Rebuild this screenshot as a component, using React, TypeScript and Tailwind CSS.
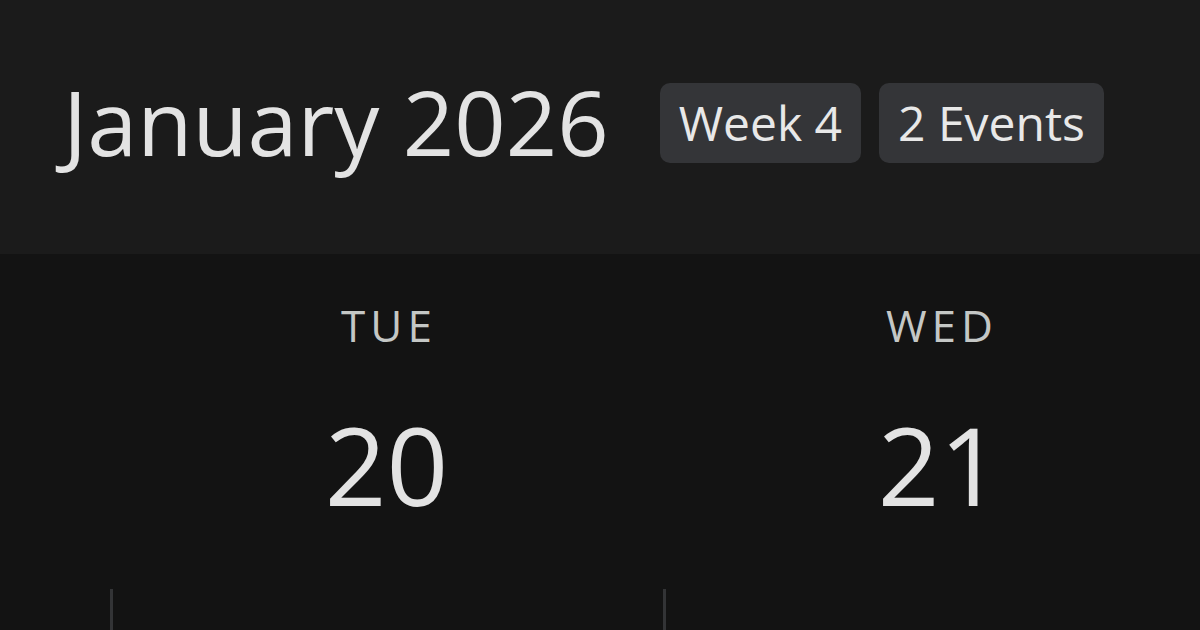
import React from "react";

const days = [
  { name: "TUE", num: "20" },
  { name: "WED", num: "21" },
];

export default function App() {
  return (
    <div
      className="w-[1200px] h-[630px] bg-[#131313] overflow-hidden flex flex-col"
      style={{ fontFamily: '"Open Sans", "Noto Sans", sans-serif' }}
    >
      <header className="h-[254px] shrink-0 bg-[#1b1b1b] flex items-center pl-[63px] pb-[12px]">
        <h1 className="text-[90px] leading-none text-[#e3e3e3] font-normal">
          January 2026
        </h1>
        <div className="flex gap-[18px] ml-[51px] mt-[3px]">
          <span className="h-[80px] px-[19px] flex items-center rounded-[10px] bg-[#343538] text-[#e8e8e8] text-[48px] font-medium leading-none">
            Week 4
          </span>
          <span className="h-[80px] px-[19px] flex items-center rounded-[10px] bg-[#343538] text-[#e8e8e8] text-[48px] font-medium leading-none">
            2 Events
          </span>
        </div>
      </header>
      <main className="flex-1 grid grid-cols-[553px_553px] pl-[110px]">
        {days.map((d) => (
          <div key={d.name} className="flex flex-col">
            <div className="flex flex-col items-center pt-[49px]">
              <span className="text-[44px] leading-none tracking-[5px] pl-[5px] text-[#c4c7c5]">
                {d.name}
              </span>
              <span className="mt-[64px] text-[108px] leading-none text-[#e3e3e3]">
                {d.num}
              </span>
            </div>
            <div className="mt-[70px] w-[3px] flex-1 bg-[#333436]" />
          </div>
        ))}
      </main>
    </div>
  );
}
